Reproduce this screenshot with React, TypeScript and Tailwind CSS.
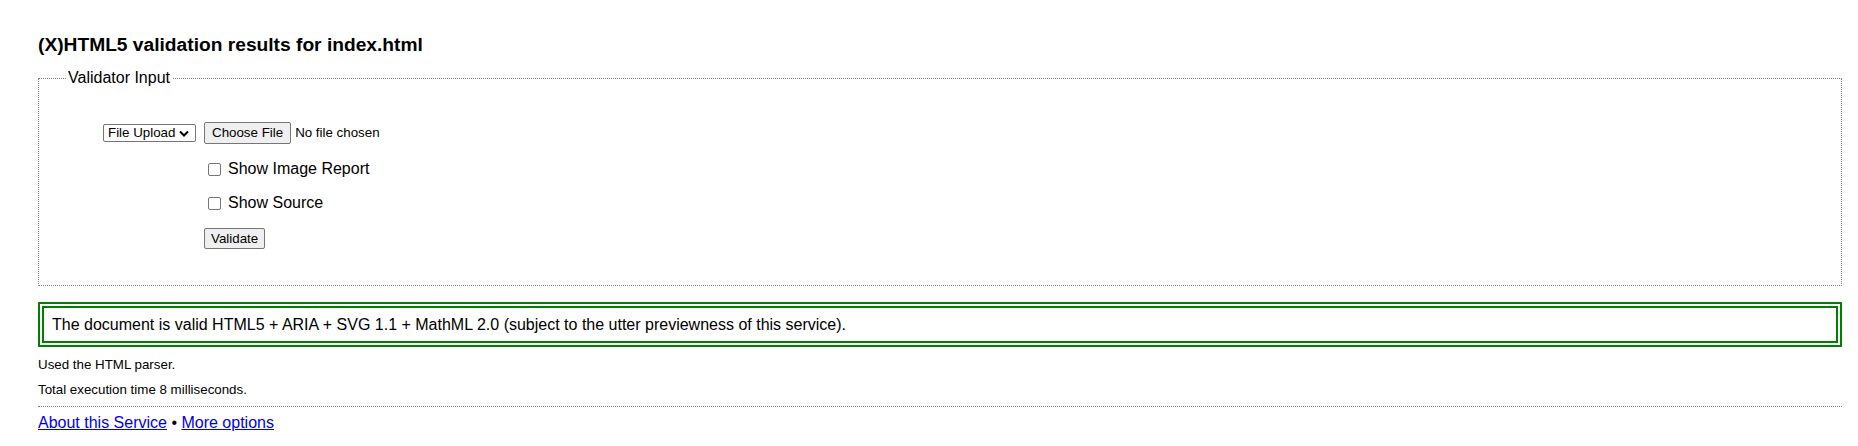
export default function App() {
  return (
    <div className="min-h-screen bg-white pl-[38px] pr-[16px] pt-[34px] font-['Liberation_Sans',Arial,sans-serif] text-black">
      <h2 className="text-[19.2px] font-bold leading-[22px]">
        (X)HTML5 validation results for index.html
      </h2>

      <fieldset className="mt-[13px] border border-dotted border-[#888] p-0">
        <legend className="ml-[27px] px-[2px] text-[16px] leading-[18px]">
          Validator Input
        </legend>

        <div className="flex items-start gap-[8px] pb-[36px] pl-[64px] pt-[35px]">
          <div className="mt-[2px] flex h-[18px] w-[93px] items-center justify-between rounded-[2px] border border-[#767676] pl-[4px] pr-[6px] text-[13.33px]">
            <span>File Upload</span>
            <svg width="10" height="7" viewBox="0 0 10 7">
              <polyline points="1,1.5 5,5.5 9,1.5" fill="none" stroke="#000" strokeWidth="2" />
            </svg>
          </div>

          <div className="flex flex-col">
            <div className="flex h-[22px] items-center text-[13.33px]">
              <span className="flex h-[22px] items-center rounded-[2px] border border-[#767676] bg-[#efefef] px-[7px]">
                Choose File
              </span>
              <span className="ml-[4px]">No file chosen</span>
            </div>

            <label className="mt-[16px] flex items-center text-[16px] leading-[18px]">
              <span className="ml-[4px] mr-[7px] h-[13px] w-[13px] rounded-[2px] border border-[#767676] bg-white" />
              Show Image Report
            </label>

            <label className="mt-[16px] flex items-center text-[16px] leading-[18px]">
              <span className="ml-[4px] mr-[7px] h-[13px] w-[13px] rounded-[2px] border border-[#767676] bg-white" />
              Show Source
            </label>

            <div className="mt-[16px] flex">
              <span className="flex h-[21px] items-center rounded-[2px] border border-[#767676] bg-[#efefef] px-[6px] text-[13.33px]">
                Validate
              </span>
            </div>
          </div>
        </div>
      </fieldset>

      <div className="mt-4 border-[6px] border-double border-[#008000] px-[8px] py-[7px] text-[16px] leading-[19px]">
        The document is valid HTML5 + ARIA + SVG 1.1 + MathML 2.0 (subject to the utter previewness of this service).
      </div>

      <p className="mt-[10px] text-[13.33px] leading-[15px]">Used the HTML parser.</p>
      <p className="mt-[10px] text-[13.33px] leading-[15px]">Total execution time 8 milliseconds.</p>

      <hr className="mt-[9px] border-t border-dotted border-[#888]" />

      <p className="mt-[7px] text-[16px] leading-[18px]">
        <a href="#" className="text-[#0000ee] underline">About this Service</a>
        {" • "}
        <a href="#" className="text-[#0000ee] underline">More options</a>
      </p>
    </div>
  );
}
